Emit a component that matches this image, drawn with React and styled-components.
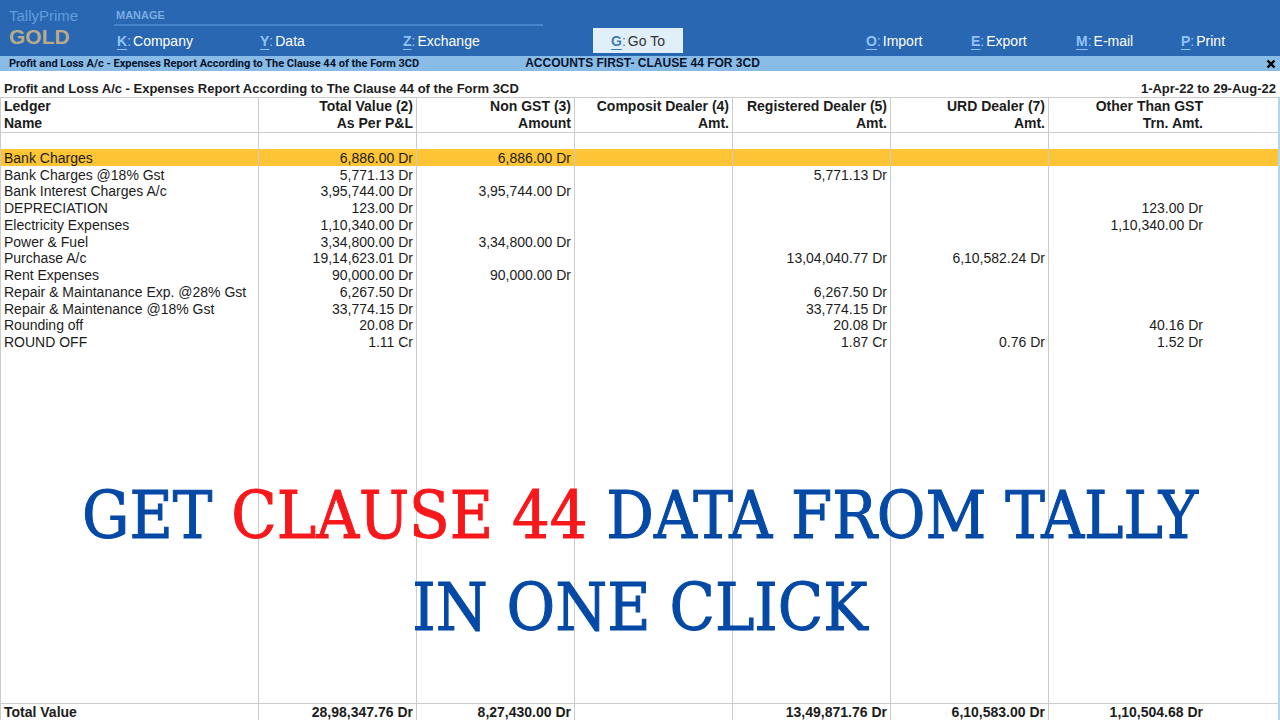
import React from "react";
import styled, { createGlobalStyle } from "styled-components";

const reportName =
  "Profit and Loss A/c - Expenses Report According to The Clause 44 of the Form 3CD";

const manageMenu = [
  { hotkey: "K", label: "Company" },
  { hotkey: "Y", label: "Data" },
  { hotkey: "Z", label: "Exchange" },
];

const shareMenu = [
  { hotkey: "O", label: "Import" },
  { hotkey: "E", label: "Export" },
  { hotkey: "M", label: "E-mail" },
  { hotkey: "P", label: "Print" },
];

const columns = [
  ["Ledger", "Name"],
  ["Total Value (2)", "As Per P&L"],
  ["Non GST (3)", "Amount"],
  ["Composit Dealer (4)", "Amt."],
  ["Registered Dealer (5)", "Amt."],
  ["URD Dealer (7)", "Amt."],
  ["Other Than GST", "Trn. Amt."],
];

const ledgers = [
  ["Bank Charges", "6,886.00 Dr", "6,886.00 Dr", "", "", "", ""],
  ["Bank Charges @18% Gst", "5,771.13 Dr", "", "", "5,771.13 Dr", "", ""],
  ["Bank Interest Charges A/c", "3,95,744.00 Dr", "3,95,744.00 Dr", "", "", "", ""],
  ["DEPRECIATION", "123.00 Dr", "", "", "", "", "123.00 Dr"],
  ["Electricity Expenses", "1,10,340.00 Dr", "", "", "", "", "1,10,340.00 Dr"],
  ["Power & Fuel", "3,34,800.00 Dr", "3,34,800.00 Dr", "", "", "", ""],
  ["Purchase A/c", "19,14,623.01 Dr", "", "", "13,04,040.77 Dr", "6,10,582.24 Dr", ""],
  ["Rent Expenses", "90,000.00 Dr", "90,000.00 Dr", "", "", "", ""],
  ["Repair & Maintanance Exp. @28% Gst", "6,267.50 Dr", "", "", "6,267.50 Dr", "", ""],
  ["Repair & Maintenance @18% Gst", "33,774.15 Dr", "", "", "33,774.15 Dr", "", ""],
  ["Rounding off", "20.08 Dr", "", "", "20.08 Dr", "", "40.16 Dr"],
  ["ROUND OFF", "1.11 Cr", "", "", "1.87 Cr", "0.76 Dr", "1.52 Dr"],
];

const totals = [
  "Total Value",
  "28,98,347.76 Dr",
  "8,27,430.00 Dr",
  "",
  "13,49,871.76 Dr",
  "6,10,583.00 Dr",
  "1,10,504.68 Dr",
];

function MenuItem({ hotkey, label, active }) {
  return (
    <MenuButton type="button" $active={active}>
      <Hotkey $active={active}>
        <u>{hotkey}</u>:
      </Hotkey>
      {label}
    </MenuButton>
  );
}

export default function App() {
  return (
    <Page>
      <GlobalStyle />
      <TopBar>
        <Brand>
          <Product>TallyPrime</Product>
          <Edition>GOLD</Edition>
        </Brand>
        <ManageGroup>
          <GroupTitle>MANAGE</GroupTitle>
          <Menu $itemWidth={143}>
            {manageMenu.map((item) => (
              <MenuItem key={item.hotkey} {...item} />
            ))}
          </Menu>
        </ManageGroup>
        <GoToGroup>
          <MenuItem hotkey="G" label="Go To" active />
        </GoToGroup>
        <ShareGroup>
          <Menu $itemWidth={105}>
            {shareMenu.map((item) => (
              <MenuItem key={item.hotkey} {...item} />
            ))}
          </Menu>
        </ShareGroup>
      </TopBar>

      <TitleBar>
        <ScreenName>{reportName}</ScreenName>
        <span>ACCOUNTS FIRST- CLAUSE 44 FOR 3CD</span>
        <CloseButton type="button" aria-label="Close">
          <svg width="10" height="10" viewBox="0 0 10 10">
            <path d="M1.5 1.5l7 7M8.5 1.5l-7 7" stroke="#000" strokeWidth="2.4" />
          </svg>
        </CloseButton>
      </TitleBar>

      <ReportHeading>
        <h1>{reportName}</h1>
        <span>1-Apr-22 to 29-Aug-22</span>
      </ReportHeading>

      <ReportArea>
        <Report>
          <colgroup>
            <col />
            {columns.slice(2).map(([title]) => (
              <AmountCol key={title} />
            ))}
            <LastCol />
          </colgroup>
          <thead>
            <tr>
              {columns.map(([first, second]) => (
                <HeadCell key={first} scope="col">
                  {first}
                  <br />
                  {second}
                </HeadCell>
              ))}
            </tr>
          </thead>
          <tbody>
            <SpacerRow>
              {columns.map(([title]) => (
                <Cell key={title} />
              ))}
            </SpacerRow>
            {ledgers.map((ledger, i) => (
              <LedgerRow key={ledger[0]} $selected={i === 0}>
                {ledger.map((value, j) => (
                  <Cell key={j}>{value}</Cell>
                ))}
              </LedgerRow>
            ))}
            <tr>
              {columns.map(([title]) => (
                <Cell key={title} />
              ))}
            </tr>
          </tbody>
          <tfoot>
            <tr>
              {totals.map((value, j) => (
                <TotalCell key={j}>{value}</TotalCell>
              ))}
            </tr>
          </tfoot>
        </Report>
        <Caption>
          GET <em>CLAUSE 44</em> DATA FROM TALLY
          <br />
          IN ONE CLICK
        </Caption>
      </ReportArea>
    </Page>
  );
}

const GlobalStyle = createGlobalStyle`
  * {
    box-sizing: border-box;
  }

  body {
    margin: 0;
    background: #fff;
    color: #1c1c1c;
    font-family: "Liberation Sans", Arial, sans-serif;
    font-size: 14px;
  }

  button {
    border: 0;
    padding: 0;
    background: none;
    font: inherit;
    cursor: pointer;
  }
`;

const Page = styled.div`
  display: flex;
  flex-direction: column;
  min-height: 100vh;
`;

const TopBar = styled.header`
  display: grid;
  grid-template-columns: 114px 429px 1fr 420px;
  height: 56px;
  background: #2967b2;
`;

const Brand = styled.div`
  padding: 8px 0 0 9px;
`;

const Product = styled.div`
  color: #629ddd;
  font-size: 15px;
  line-height: 16px;
`;

const Edition = styled.div`
  color: #b9ab87;
  font-size: 21px;
  font-weight: bold;
  line-height: 26px;
`;

const ManageGroup = styled.nav`
  display: flex;
  flex-direction: column;
`;

const GroupTitle = styled.div`
  height: 26px;
  padding: 8px 0 0 2px;
  border-bottom: 2px solid #4684cc;
  color: #7aade2;
  font-size: 11px;
  font-weight: bold;
  line-height: 14px;
`;

const Menu = styled.div`
  display: grid;
  grid-auto-flow: column;
  grid-auto-columns: ${({ $itemWidth }) => $itemWidth}px;
  height: 30px;
  padding-left: 3px;
`;

const GoToGroup = styled.div`
  display: flex;
  align-items: flex-end;
  padding: 0 0 3px 50px;
`;

const ShareGroup = styled.nav`
  display: flex;
  flex-direction: column;
  justify-content: flex-end;
  padding-left: 3px;
`;

const MenuButton = styled.button`
  display: flex;
  align-items: center;
  gap: 2px;
  color: ${({ $active }) => ($active ? "#333" : "#fff")};
  ${({ $active }) =>
    $active &&
    `
    justify-content: center;
    width: 90px;
    height: 25px;
    background: #e1effa;
  `}
`;

const Hotkey = styled.span`
  color: ${({ $active }) => ($active ? "#4180b4" : "#8fc3f7")};

  u {
    font-weight: bold;
    text-decoration-thickness: 1px;
    text-underline-offset: 3px;
  }
`;

const TitleBar = styled.div`
  display: grid;
  grid-template-columns: 1fr auto 1fr;
  align-items: center;
  height: 15px;
  padding: 0 4px 0 9px;
  background: #88bbe5;
  color: #061330;
  font-size: 12px;
  font-weight: bold;
  line-height: 15px;
  white-space: nowrap;
`;

const ScreenName = styled.span`
  font-family: Roboto, "Liberation Sans", sans-serif;
  font-size: 11px;
`;

const CloseButton = styled.button`
  display: flex;
  justify-self: end;
`;

const ReportHeading = styled.div`
  display: flex;
  justify-content: space-between;
  padding: 9px 4px 0;
  font-size: 13px;
  font-weight: bold;
  line-height: 17px;

  h1 {
    margin: 0;
    font-size: inherit;
  }
`;

const ReportArea = styled.main`
  position: relative;
  display: flex;
  flex: 1;
`;

const Report = styled.table`
  flex: 1;
  border-spacing: 0;
  border-right: 2px solid #b5d5e8;
  table-layout: fixed;
`;

const AmountCol = styled.col`
  width: 158px;
`;

const LastCol = styled.col`
  width: 230px;
`;

const Cell = styled.td`
  padding: 0 3px;
  border-left: 1px solid #ccc;
  line-height: 16px;
  text-align: right;
  white-space: nowrap;

  &:first-child {
    text-align: left;
  }

  &:last-child {
    padding-right: 75px;
  }
`;

const HeadCell = styled(Cell).attrs({ as: "th" })`
  height: 35px;
  border-top: 1px solid #ccc;
  border-bottom: 1px solid #ccc;
  line-height: 17px;
`;

const TotalCell = styled(Cell)`
  height: 17px;
  border-top: 1px solid #ccc;
  font-weight: bold;
`;

const SpacerRow = styled.tr`
  height: 16px;
`;

const LedgerRow = styled.tr`
  height: 17px;
  background: ${({ $selected }) => ($selected ? "#fdc435" : "transparent")};

  &:nth-child(4n) {
    height: 16px;
  }
`;

const Caption = styled.h2`
  position: absolute;
  top: 373px;
  left: 0;
  right: 0;
  margin: 0;
  color: #0449a5;
  font-family: "DejaVu Serif Condensed", "DejaVu Serif", serif;
  font-size: 66px;
  font-weight: normal;
  line-height: 92px;
  text-align: center;
  -webkit-text-stroke: 1px currentColor;

  em {
    color: #f7181c;
    font-style: normal;
  }
`;
